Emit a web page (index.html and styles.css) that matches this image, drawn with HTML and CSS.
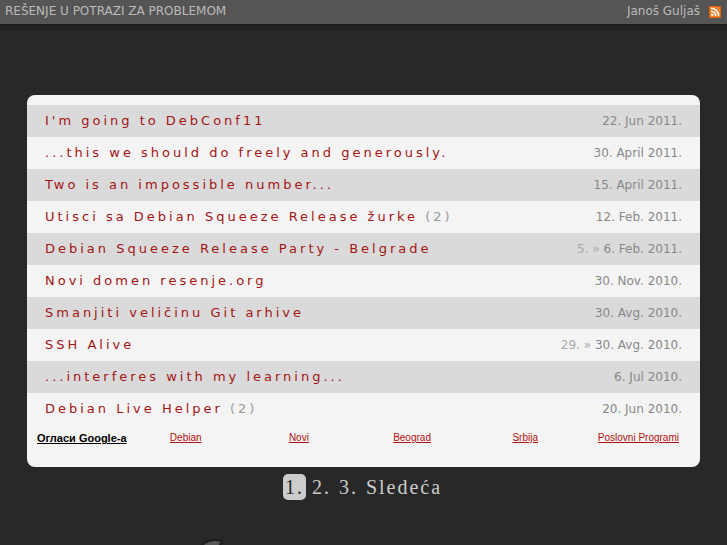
FILE: index.html
```
<!DOCTYPE html>
<html lang="sr">
<head>
    <meta charset="UTF-8">
    <meta name="viewport" content="width=device-width, initial-scale=1.0">
    <title>Rešenje u potrazi za problemom</title>
    <link rel="stylesheet" href="styles.css">
</head>
<body>
    <header class="topbar">
        <a class="site-name" href="#">REŠENJE U POTRAZI ZA PROBLEMOM</a>
        <div class="topbar-right">
            <a href="#">Janoš Guljaš</a>
            <a class="rss" href="#" aria-label="RSS">
                <svg width="12" height="12" viewBox="0 0 12 12">
                    <rect width="12" height="12" rx="1" fill="#e0620f"/>
                    <rect x="1" y="1" width="10" height="10" fill="#f0802a"/>
                    <circle cx="3.3" cy="8.8" r="1.3" fill="#fff"/>
                    <path d="M2 5.2a4.8 4.8 0 0 1 4.8 4.8M2 2.3a7.7 7.7 0 0 1 7.7 7.7" fill="none" stroke="#fff" stroke-width="1.5"/>
                </svg>
            </a>
        </div>
    </header>

    <main class="content">
        <div class="box">
            <ul class="posts">
                <li><a href="#">I'm going to DebConf11</a><span class="date">22. Jun 2011.</span></li>
                <li><a href="#">...this we should do freely and generously.</a><span class="date">30. April 2011.</span></li>
                <li><a href="#">Two is an impossible number...</a><span class="date">15. April 2011.</span></li>
                <li><a href="#">Utisci sa Debian Squeeze Release žurke <span class="count">(2)</span></a><span class="date">12. Feb. 2011.</span></li>
                <li><a href="#">Debian Squeeze Release Party - Belgrade</a><span class="date"><span class="from">5. »</span> 6. Feb. 2011.</span></li>
                <li><a href="#">Novi domen resenje.org</a><span class="date">30. Nov. 2010.</span></li>
                <li><a href="#">Smanjiti veličinu Git arhive</a><span class="date">30. Avg. 2010.</span></li>
                <li><a href="#">SSH Alive</a><span class="date"><span class="from">29. »</span> 30. Avg. 2010.</span></li>
                <li><a href="#">...interferes with my learning...</a><span class="date">6. Jul 2010.</span></li>
                <li><a href="#">Debian Live Helper <span class="count">(2)</span></a><span class="date">20. Jun 2010.</span></li>
            </ul>
            <div class="ads">
                <a class="ads-label" href="#">Огласи Google-а</a>
                <a href="#">Debian</a>
                <a href="#">Novi</a>
                <a href="#">Beograd</a>
                <a href="#">Srbija</a>
                <a href="#">Poslovni Programi</a>
            </div>
        </div>
        <nav class="pages">
            <a class="current" href="#">1.</a>
            <a href="#">2.</a>
            <a href="#">3.</a>
            <a href="#">Sledeća</a>
        </nav>
    </main>

    <footer class="footer">
        <svg class="logo" width="120" height="120" viewBox="0 0 120 120">
            <path d="M35 2C12-4 0 22 0 50s14 54 40 54V88C24 88 16 70 18 48S28 16 35 2z" fill="#555" stroke="#1c1c1c" stroke-width="2"/>
        </svg>
    </footer>
</body>
</html>
```
FILE: styles.css
```
body {
    margin: 0;
    height: 100vh;
    overflow: hidden;
    background: #282828;
    font-family: "DejaVu Sans", sans-serif;
    font-size: 12px;
}
a {
    text-decoration: none;
    color: inherit;
}
.topbar {
    display: flex;
    justify-content: space-between;
    align-items: center;
    box-sizing: border-box;
    height: 24px;
    padding: 0 6px 2px 5px;
    background: #555;
    color: #bbb;
    box-shadow: 0 1px 0 1px #1c1c1c, 0 6px 0 #232323;
}
.topbar-right {
    display: flex;
    align-items: center;
    gap: 9px;
}
.rss svg {
    display: block;
    margin-top: 2px;
}
.content {
    padding: 71px 27px 0;
}
.box {
    padding: 10px 0;
    background: #f4f4f4;
    border-radius: 8px;
}
.posts {
    list-style: none;
    margin: 0;
    padding: 0;
}
.posts li {
    display: flex;
    justify-content: space-between;
    align-items: center;
    box-sizing: border-box;
    height: 32px;
    padding: 0 18px 1px;
    color: #a31515;
    font-size: 13px;
    letter-spacing: 3px;
}
.posts li:nth-child(odd) {
    background: #dadada;
}
.count {
    color: #999;
}
.date {
    color: #888;
    font-size: 12px;
    letter-spacing: 0;
}
.from {
    color: #aaa;
}
.ads {
    display: grid;
    grid-template-columns: 92fr repeat(5, 113fr);
    height: 32px;
    padding: 0 5px 0 10px;
    color: #b01010;
    font-family: "Liberation Sans", Arial, sans-serif;
    font-size: 10px;
    line-height: 26px;
    text-align: center;
}
.ads a {
    text-decoration: underline;
}
.ads .ads-label {
    color: #000;
    font-size: 11px;
    font-weight: bold;
    text-align: left;
    white-space: nowrap;
}
.pages {
    display: flex;
    justify-content: center;
    gap: 4px;
    padding-top: 7px;
    color: #ccc;
    font-family: "Liberation Serif", "Times New Roman", serif;
    font-size: 20px;
    line-height: 26px;
    letter-spacing: 2px;
}
.pages a {
    padding: 0 2px;
}
.pages .current {
    background: #ccc;
    border-radius: 5px;
    color: #282828;
}
.footer {
    padding: 39px 0 0 187px;
}
.logo {
    display: block;
}
```
